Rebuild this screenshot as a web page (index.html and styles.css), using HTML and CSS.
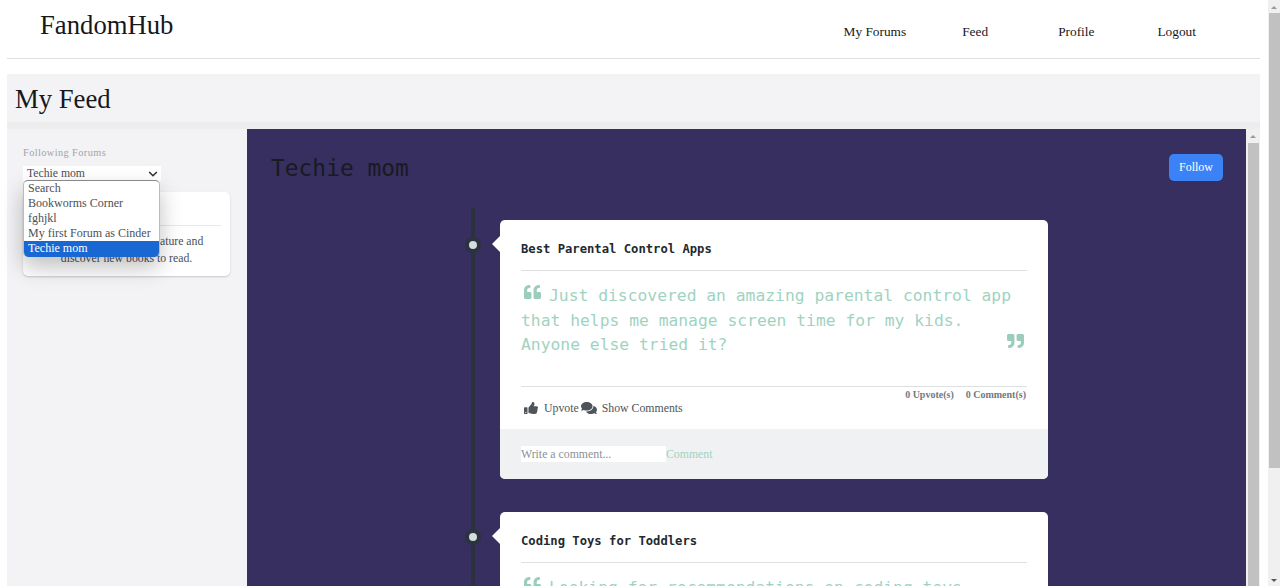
FILE: index.html
```html
<!DOCTYPE html>
<html lang="en">
<head>
<meta charset="utf-8">
<title>FandomHub</title>
<link rel="stylesheet" href="styles.css">
</head>
<body>
<svg width="0" height="0" class="defs">
  <symbol id="quote-left" viewBox="0 32 512 448" preserveAspectRatio="none"><path d="M464 256h-80v-64c0-35.300 28.700-64 64-64h8c13.300 0 24-10.700 24-24V56c0-13.300-10.700-24-24-24h-8c-88.400 0-160 71.600-160 160v240c0 26.500 21.500 48 48 48h128c26.500 0 48-21.500 48-48V304c0-26.500-21.500-48-48-48zm-288 0H96v-64c0-35.300 28.700-64 64-64h8c13.300 0 24-10.700 24-24V56c0-13.300-10.700-24-24-24h-8C71.600 32 0 103.600 0 192v240c0 26.500 21.500 48 48 48h128c26.500 0 48-21.500 48-48V304c0-26.500-21.500-48-48-48z"/></symbol>
  <symbol id="thumb" viewBox="0 0 512 512" preserveAspectRatio="none"><path d="M104 224H24c-13.300 0-24 10.700-24 24v240c0 13.300 10.700 24 24 24h80c13.300 0 24-10.700 24-24V248c0-13.300-10.700-24-24-24zM64 472c-13.300 0-24-10.700-24-24s10.700-24 24-24 24 10.700 24 24-10.700 24-24 24zM384 81.500c0 42.400-26 66.200-33.300 94.500h101.700c33.400 0 59.400 27.700 59.600 58.100.100 17.900-7.500 37.200-19.400 49.200l-.100.100c9.800 23.300 8.200 56-9.300 79.500 8.700 25.900-.100 57.700-16.400 74.800 4.300 17.600 2.200 32.600-6.100 44.600-20.200 29.100-70.400 29.600-112.800 29.600h-2.800c-47.900 0-87.100-17.500-118.600-31.500-15.800-7-36.500-15.800-52.200-16-6.500-.100-11.800-5.500-11.800-12V238.600c0-3.200 1.300-6.300 3.600-8.500 39.200-38.800 56.100-79.800 88.300-112 14.700-14.700 20-36.900 25.200-58.300C283.800 41.500 293.200 0 312 0c24 0 72 8 72 81.500z"/></symbol>
  <symbol id="comments" viewBox="0 32 576 448" preserveAspectRatio="none"><path d="M416 192c0-88.400-93.100-160-208-160S0 103.600 0 192c0 34.300 14.100 65.900 38 92-13.400 30.200-35.500 54.200-35.800 54.500-2.200 2.300-2.800 5.700-1.500 8.700S4.800 352 8 352c36.600 0 66.900-12.300 88.700-25 32.200 15.700 70.300 25 111.300 25 114.900 0 208-71.600 208-160zm122 220c23.900-26 38-57.700 38-92 0-66.900-53.500-124.200-129.300-148.100.900 6.600 1.300 13.300 1.300 20.100 0 105.900-107.700 192-240 192-10.800 0-21.300-.800-31.700-1.900C207.800 439.600 281.800 480 368 480c41 0 79.100-9.200 111.300-25 21.800 12.700 52.100 25 88.700 25 3.200 0 6.100-1.900 7.300-4.800 1.300-2.900.700-6.300-1.500-8.700-.300-.300-22.400-24.200-35.800-54.500z"/></symbol>
</svg>
<div class="window">
  <div class="page">
    <header class="topbar">
      <div class="brand">FandomHub</div>
      <nav class="nav"><a class="n1">My Forums</a><a class="n2">Feed</a><a class="n3">Profile</a><a>Logout</a></nav>
    </header>
    <div class="heading"><span>My Feed</span></div>
    <div class="columns">
      <aside class="sidebar">
        <div class="label">Following Forums</div>
        <div class="select">
          <span>Techie mom</span>
          <svg class="chevron" viewBox="0 0 10 6"><path d="M1.200 1 5 4.700 8.800 1"/></svg>
          <ul class="menu">
            <li>Search</li><li>Bookworms Corner</li><li>fghjkl</li><li>My first Forum as Cinder</li><li class="active">Techie mom</li>
          </ul>
        </div>
        <div class="about">
          <div class="rule"></div>
          <p>Explore a world of literature and<br>discover new books to read.</p>
        </div>
      </aside>
      <main class="forum">
        <div class="forum-head"><h1>Techie mom</h1><button class="follow">Follow</button></div>
        <div class="timeline">
          <div class="line"></div>
          <div class="posts">
            <article class="post">
              <i class="dot"></i><i class="arrow"></i>
              <div class="body">
                <h2>Best Parental Control Apps</h2>
                <div class="quote">
                  <p><svg class="ql"><use href="#quote-left"/></svg>Just discovered an amazing parental control app<br>that helps me manage screen time for my kids.<br>Anyone else tried it?</p>
                  <svg class="qr"><use href="#quote-left"/></svg>
                </div>
                <div class="actions">
                  <div class="buttons"><svg class="up"><use href="#thumb"/></svg><span class="upvote">Upvote</span><svg class="cm"><use href="#comments"/></svg><span class="show">Show Comments</span></div>
                  <div class="counts"><span>0 Upvote(s)</span><span>0 Comment(s)</span></div>
                </div>
              </div>
              <div class="reply"><div class="field">Write a comment...</div><a>Comment</a></div>
            </article>
            <article class="post">
              <i class="dot"></i><i class="arrow"></i>
              <div class="body">
                <h2>Coding Toys for Toddlers</h2>
                <div class="quote">
                  <p><svg class="ql"><use href="#quote-left"/></svg>Looking for recommendations on coding toys</p>
                </div>
              </div>
            </article>
          </div>
        </div>
      </main>
      <div class="inner-scroll"><i class="tri"></i><div class="thumb"></div></div>
    </div>
  </div>
  <div class="outer-scroll"><i class="tri"></i><div class="thumb"></div><i class="tri down"></i></div>
</div>
</body>
</html>
```

FILE: styles.css
```css
* { box-sizing: border-box; }
body { margin: 0; background: #fff; font-family: "Liberation Serif", serif; color: #16181c; overflow: hidden; }
.defs { position: absolute; }
.window { display: flex; height: 586px; }
.page { width: 1253px; margin-left: 7px; margin-right: 8px; display: flex; flex-direction: column; flex-shrink: 0; }
.topbar { height: 59px; border-bottom: 1px solid #dedfe1; margin-bottom: 15px; display: flex; justify-content: space-between; padding: 0 64px 0 33px; flex: none; }
.brand { font-size: 26.700px; line-height: 30px; padding-top: 10px; }
.nav { display: flex; font-size: 13.350px; line-height: 16px; padding-top: 24px; }
.n1 { margin-right: 56px; }
.n2 { margin-right: 70px; }
.n3 { margin-right: 63px; }
.heading { height: 55px; flex: none; background: #f3f3f5; border-bottom: 7px solid #ededee; padding: 10px 8px 0; font-size: 26.700px; line-height: 30px; }
.columns { flex: 1; min-height: 0; display: flex; }
.sidebar { width: 240px; background: #f3f3f5; padding: 17px 17px 0 16px; color: #4b5158; }
.label { font-size: 10.300px; letter-spacing: .42px; line-height: 14px; color: #a0a3a9; margin-bottom: 6px; white-space: nowrap; }
.select { position: relative; width: 138px; height: 15px; background: #fff; font-size: 11.700px; line-height: 16px; padding: 1px 4px 0; display: flex; justify-content: space-between; align-items: center; }
.chevron { width: 10px; height: 6px; margin-right: -1px; fill: none; stroke: #333; stroke-width: 1.600; }
.menu { position: absolute; z-index: 2; left: 0; top: 14px; width: 137px; height: 77px; margin: 0; padding: 0; list-style: none; background: #fff; border: 1px solid #bbb; border-top-color: #888; border-bottom: 0; border-radius: 5px; overflow: hidden; box-shadow: 0 10px 22px rgba(0,0,0,.25); }
.menu li { height: 15px; line-height: 15px; padding-left: 4px; white-space: nowrap; font-size: 12px; }
.menu .active { background: #1967d2; color: #fff; height: 16px; }
.about { height: 84px; width: 207px; margin-top: 11px; background: #fff; border-radius: 5px; padding: 33px 9px 0; box-shadow: 0 1px 2px rgba(0,0,0,.18); }
.rule { height: 1px; background: #e7e8ea; }
.about p { margin: 8px 0 0; font-size: 11.750px; line-height: 16.700px; text-align: center; white-space: nowrap; }
.forum { width: 999px; background: #362f60; overflow: hidden; }
.forum-head { height: 79px; display: flex; justify-content: space-between; align-items: flex-start; padding: 25px 23px 0 24px; }
h1 { margin: 0; font: 400 22.900px/28px "DejaVu Sans Mono", monospace; color: #191a22; }
.follow { border: 0; width: 54px; height: 27px; padding: 0; border-radius: 5px; background: #3b82f6; color: #fff; font: 12px/27px "Liberation Serif", serif; }
.timeline { display: flex; padding-left: 224px; }
.line { width: 4px; background: #2b3140; margin-right: 25px; }
.posts { width: 548px; padding-top: 12px; }
.post { position: relative; background: #fff; border-radius: 5px; margin-bottom: 33px; }
.dot { position: absolute; left: -35px; top: 17px; width: 16px; height: 16px; border-radius: 50%; background: #d5dae5; border: 4px solid #2b333d; }
.arrow { position: absolute; left: -8px; top: 16px; border: solid transparent; border-width: 8px 8px 8px 0; border-right-color: #fff; }
.body { height: 209px; padding: 17px 21px 0; }
h2 { margin: 0; height: 34px; border-bottom: 1px solid #dedfe1; font: 700 12.190px/24px "DejaVu Sans Mono", monospace; color: #22292f; }
.quote { height: 115px; display: flex; justify-content: space-between; color: #9fd3c1; }
.quote p { margin: 13px 0 0; font: 16.330px/24.500px "DejaVu Sans Mono", monospace; white-space: nowrap; flex: none; width: 485px; }
.ql, .qr { width: 17px; height: 14px; fill: #9bcdbd; }
.ql { margin: 0 8px 0 3px; vertical-align: 2px; }
.qr { transform: rotate(180deg); margin: 63px 3px 0 0; flex: none; }
.actions { border-top: 1px solid #dedfe1; display: flex; justify-content: space-between; color: #4d545a; }
.buttons { display: flex; align-items: center; padding-top: 13px; height: 29px; font-size: 11.800px; line-height: 16px; }
.buttons svg { fill: #4d545a; flex: none; }
.up { width: 14px; height: 12px; margin: 0 6px 0 3px; }
.cm { width: 16px; height: 12px; margin: 0 5px 0 2px; }
.counts { display: flex; gap: 12px; font-size: 10px; font-weight: 700; line-height: 14px; padding: 1px 1px 0 0; color: #737980; }
.reply { height: 50px; background: #f0f1f3; border-radius: 0 0 5px 5px; display: flex; padding: 17px 21px 0; font-size: 11.800px; line-height: 16px; }
.field { width: 145px; height: 16px; background: #fff; color: #8c9097; }
.reply a { color: #9fd3c1; }
.inner-scroll, .outer-scroll { background: #f0f0f0; display: flex; flex-direction: column; align-items: center; position: relative; }
.inner-scroll { width: 14px; }
.outer-scroll { width: 12px; height: 586px; }
.tri { width: 0; height: 0; border: solid transparent; border-width: 0 3px 3px; border-bottom-color: #999; margin: 6px 0 4px; }
.inner-scroll .thumb { width: 11px; flex: 1; background: #c1c1c1; margin-top: 1px; }
.outer-scroll .thumb { width: 11px; height: 455px; background: #c1c1c1; }
.down { border-width: 3px 3px 0; border-color: #555 transparent transparent; margin: auto 0 4px; }
```
